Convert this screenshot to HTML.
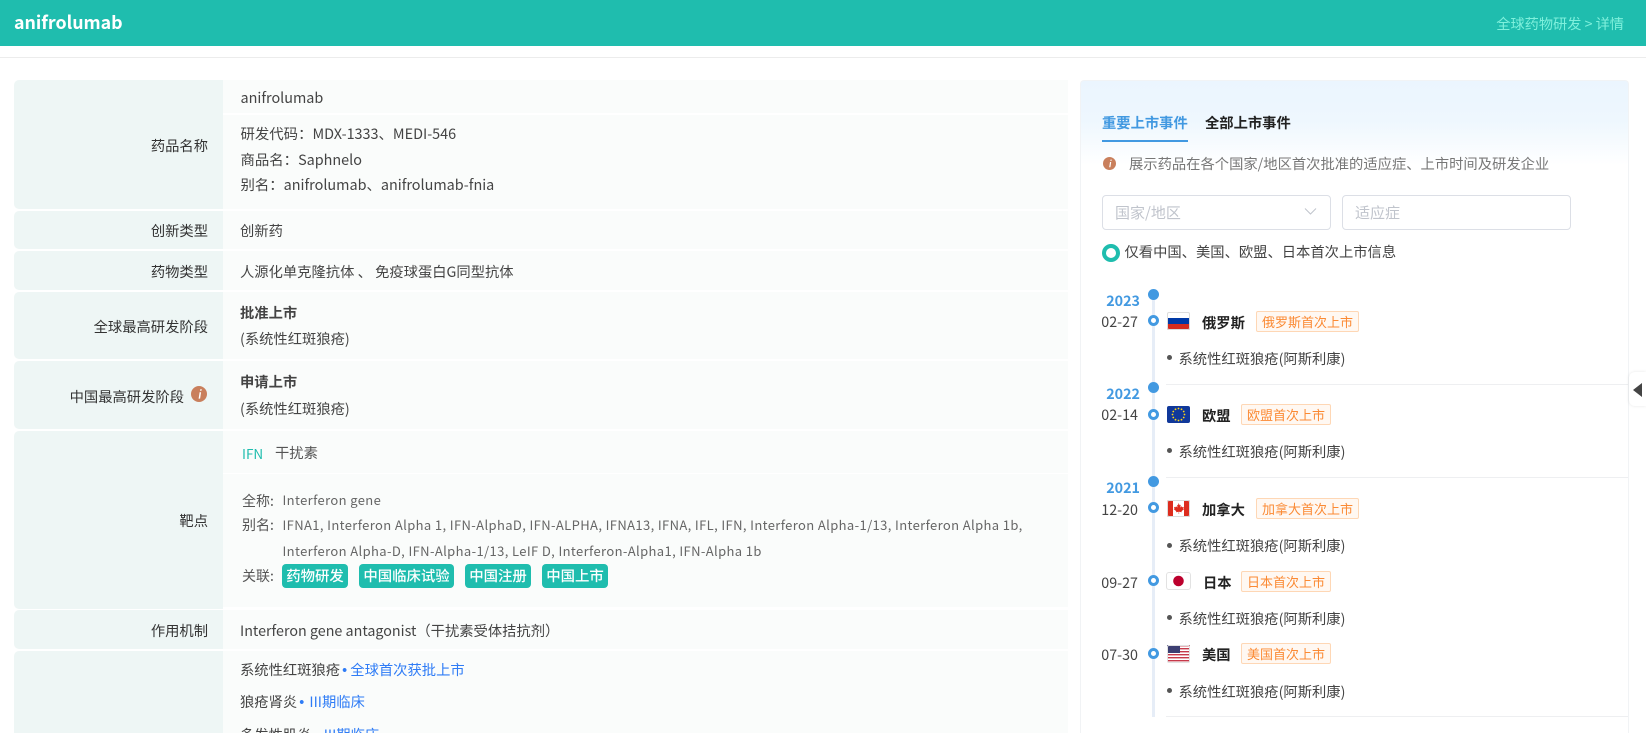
<!DOCTYPE html>
<html lang="zh"><head><meta charset="utf-8"><title>anifrolumab</title>
<style>
html,body{margin:0;padding:0;width:1646px;height:733px;overflow:hidden;background:#fff}
body{position:relative;font-family:"Noto Sans CJK SC","Liberation Sans",sans-serif;font-size:14.3px;color:#444}
.b{position:absolute}
.t{position:absolute;white-space:nowrap;line-height:20px;height:20px}
.l{position:absolute;left:14px;width:208.5px;background:#eef6f5}
.v{position:absolute;left:223px;width:845px;background:#fafcfb}
.lt{position:absolute;left:14px;width:194px;text-align:right;white-space:nowrap;line-height:20px;color:#333}
.s{font-size:13px;color:#666;letter-spacing:.375px}
.c{color:#555;font-size:14px}
.tag{position:absolute;top:564px;height:24px;background:#1fbdae;color:#fff;font-weight:500;font-size:14.4px;border-radius:4px;text-align:center;line-height:23px;white-space:nowrap}
.bl{color:#2f7cf6}
.bu{font-family:"Liberation Sans",sans-serif;margin-left:2px}
.big{position:absolute;left:1148px;width:11px;height:11px;border-radius:50%;background:#4299e1}
.ring{position:absolute;left:1148px;width:11px;height:11px;border-radius:50%;background:#fff;border:3px solid #4299e1;box-sizing:border-box}
.yr{position:absolute;left:1090px;width:50px;text-align:right;color:#4299e1;font-weight:700;line-height:20px}
.dt{position:absolute;left:1088px;width:50px;text-align:right;color:#444;line-height:20px}
.nm{position:absolute;font-weight:700;color:#222;line-height:20px;white-space:nowrap}
.tg{position:absolute;height:21px;box-sizing:border-box;border:1px solid #fed7b5;background:#fff8f2;color:#fb8a34;border-radius:2px;line-height:19px;text-align:center;font-size:13px;white-space:nowrap}
.dot{position:absolute;left:1166.5px;width:5px;height:5px;border-radius:50%;background:#555}
.ind{position:absolute;left:1178.5px;line-height:20px;white-space:nowrap;color:#444}
.hr{position:absolute;left:1166px;width:462px;height:1px;background:#eeeff1}
svg{position:absolute;display:block}
</style></head><body>

<div class="b" style="left:0;top:0;width:1646px;height:46px;background:#1fbdae"></div>
<div class="t" style="left:14px;top:12px;font-size:17.8px;font-weight:700;color:#fff">anifrolumab</div>
<div class="t" style="right:22px;top:14px;color:#7ff0dc;font-size:14.2px">全球药物研发 &gt; 详情</div>
<div class="b" style="left:0;top:57px;width:1646px;height:1px;background:#ececec"></div>

<!-- Left table -->
<div class="l" style="top:80px;height:129px;border-radius:5px 0 0 5px"></div>
<div class="v" style="top:80px;height:33px"></div>
<div class="v" style="top:115px;height:94px"></div>
<div class="l" style="top:211px;height:38px;border-radius:5px 0 0 5px"></div>
<div class="v" style="top:211px;height:38px"></div>
<div class="l" style="top:251px;height:39px;border-radius:5px 0 0 5px"></div>
<div class="v" style="top:251px;height:39px"></div>
<div class="l" style="top:292px;height:67px;border-radius:5px 0 0 5px"></div>
<div class="v" style="top:292px;height:67px"></div>
<div class="l" style="top:361px;height:68px;border-radius:5px 0 0 5px"></div>
<div class="v" style="top:361px;height:68px"></div>
<div class="l" style="top:431px;height:178px;border-radius:5px 0 0 5px"></div>
<div class="v" style="top:431px;height:42px"></div>
<div class="v" style="top:474px;height:133px"></div>
<div class="l" style="top:610px;height:39px;border-radius:5px 0 0 5px"></div>
<div class="v" style="top:610px;height:39px"></div>
<div class="l" style="top:651px;height:82px;border-radius:5px 0 0 0"></div>
<div class="v" style="top:651px;height:82px"></div>

<div class="lt" style="top:136px">药品名称</div>
<div class="lt" style="top:221px">创新类型</div>
<div class="lt" style="top:262px">药物类型</div>
<div class="lt" style="top:317px">全球最高研发阶段</div>
<div class="lt" style="top:387px;left:14px;width:170px">中国最高研发阶段</div>
<div class="lt" style="top:511px">靶点</div>
<div class="lt" style="top:621px">作用机制</div>

<svg style="left:191px;top:386px" width="16" height="16" viewBox="0 0 16 16"><circle cx="8" cy="8" r="8" fill="#c97f5c"/><path d="M9.3 3.2h1.5l-.3 1.5H9zM8.6 6.2h1.5l-1 6.4H7.6z" fill="#fff"/></svg>

<div class="t" style="left:240.500px;top:88px;font-size:14.4px">anifrolumab</div>
<div class="t" style="left:240.500px;top:124px;font-size:14.4px">研发代码：MDX-1333、MEDI-546</div>
<div class="t" style="left:240.500px;top:150px;font-size:14.4px">商品名：Saphnelo</div>
<div class="t" style="left:240.500px;top:175px;font-size:14.4px">别名：anifrolumab、anifrolumab-fnia</div>
<div class="t" style="left:240px;top:221px">创新药</div>
<div class="t" style="left:240px;top:262px">人源化单克隆抗体 、 免疫球蛋白G同型抗体</div>
<div class="t" style="left:240px;top:303px;font-weight:700">批准上市</div>
<div class="t" style="left:240px;top:329px">(系统性红斑狼疮)</div>
<div class="t" style="left:240px;top:372px;font-weight:700">申请上市</div>
<div class="t" style="left:240px;top:399px">(系统性红斑狼疮)</div>

<div class="t" style="left:242px;top:443px;font-size:13.5px;color:#1fbdae">IFN</div>
<div class="t" style="left:275px;top:443px;color:#555">干扰素</div>

<div class="t c" style="left:242px;top:491px">全称:</div>
<div class="t s" style="left:282.5px;top:490px">Interferon gene</div>
<div class="t c" style="left:242px;top:515px">别名:</div>
<div class="t s" style="left:282.5px;top:515px">IFNA1, Interferon Alpha 1, IFN-AlphaD, IFN-ALPHA, IFNA13, IFNA, IFL, IFN, Interferon Alpha-1/13, Interferon Alpha 1b,</div>
<div class="t s" style="left:282.5px;top:541px">Interferon Alpha-D, IFN-Alpha-1/13, LeIF D, Interferon-Alpha1, IFN-Alpha 1b</div>
<div class="t c" style="left:242px;top:566px">关联:</div>
<div class="tag" style="left:282px;width:66px">药物研发</div>
<div class="tag" style="left:359px;width:95px">中国临床试验</div>
<div class="tag" style="left:465px;width:66px">中国注册</div>
<div class="tag" style="left:542px;width:66px">中国上市</div>

<div class="t" style="left:240px;top:621px">Interferon gene antagonist（干扰素受体拮抗剂）</div>
<div class="t" style="left:240px;top:660px">系统性红斑狼疮<span class="bl"><span class="bu">•</span> 全球首次获批上市</span></div>
<div class="t" style="left:240px;top:692px">狼疮肾炎<span class="bl"><span class="bu">•</span> <span style="margin-left:2px">III期临床</span></span></div>
<div class="t" style="left:240px;top:725px">多发性肌炎<span class="bl"><span class="bu">•</span> <span style="margin-left:2px">III期临床</span></span></div>

<!-- Right panel -->
<div class="b" style="left:1080px;top:80px;width:549px;height:653px;box-sizing:border-box;border:1px solid #f1f3f5;border-bottom:0;border-radius:4px 4px 0 0;background:linear-gradient(#ebf5fe 0,#eef7fe 40px,#fff 84px)"></div>

<div class="t" style="left:1102px;top:113px;font-weight:700;color:#4299e1">重要上市事件</div>
<div class="t" style="left:1205px;top:113px;font-weight:700;color:#222">全部上市事件</div>
<div class="b" style="left:1102px;top:140px;width:86px;height:2px;background:#4299e1"></div>

<svg style="left:1103px;top:157px" width="13" height="13" viewBox="0 0 16 16"><circle cx="8" cy="8" r="8" fill="#c97f5c"/><path d="M9.3 3.2h1.5l-.3 1.5H9zM8.6 6.2h1.5l-1 6.4H7.6z" fill="#fff"/></svg>
<div class="t" style="left:1129px;top:154px;color:#777;font-size:14.3px">展示药品在各个国家/地区首次批准的适应症、上市时间及研发企业</div>

<div class="b" style="left:1102px;top:195px;width:229px;height:35px;box-sizing:border-box;border:1px solid #dcdfe6;border-radius:4px;background:#fff"></div>
<div class="t" style="left:1115px;top:203px;color:#c0c4cc;font-size:15px">国家/地区</div>
<svg style="left:1304px;top:207px" width="13" height="9" viewBox="0 0 13 9"><path d="M1 1.5l5.5 5.5L12 1.5" fill="none" stroke="#c0c4cc" stroke-width="1"/></svg>
<div class="b" style="left:1342px;top:195px;width:229px;height:35px;box-sizing:border-box;border:1px solid #dcdfe6;border-radius:4px;background:#fff"></div>
<div class="t" style="left:1355px;top:203px;color:#c0c4cc;font-size:15px">适应症</div>

<div class="b" style="left:1102px;top:243.500px;width:18px;height:18px;box-sizing:border-box;border:4px solid #1fbdae;border-radius:50%;background:#fff"></div>
<div class="t" style="left:1124.500px;top:242px">仅看中国、美国、欧盟、日本首次上市信息</div>

<!-- Timeline -->
<div class="b" style="left:1151.500px;top:294px;width:3px;height:423px;background:#e6edf7"></div>

<div class="hr" style="top:384px"></div>
<div class="hr" style="top:477px"></div>
<div class="hr" style="top:716px"></div>

<div class="big" style="top:289px"></div>
<div class="yr" style="top:291px">2023</div>
<div class="ring" style="top:315px"></div>
<div class="dt" style="top:312px">02-27</div>
<svg style="left:1167px;top:312px" width="23" height="18" viewBox="0 0 23 18"><rect width="23" height="18" rx="2" fill="#fff"/><rect y="6" width="23" height="6" fill="#0039a6"/><path d="M0 12h23v4a2 2 0 0 1-2 2H2a2 2 0 0 1-2-2z" fill="#d52b1e"/><rect x=".5" y=".5" width="22" height="17" rx="1.500" fill="none" stroke="#dcdcdc"/></svg>
<div class="nm" style="left:1202px;top:313px">俄罗斯</div>
<div class="tg" style="left:1256px;top:311px;width:103px">俄罗斯首次上市</div>
<div class="dot" style="top:355px"></div>
<div class="ind" style="top:349px">系统性红斑狼疮(阿斯利康)</div>

<div class="big" style="top:382px"></div>
<div class="yr" style="top:384px">2022</div>
<div class="ring" style="top:409px"></div>
<div class="dt" style="top:405px">02-14</div>
<svg style="left:1167px;top:406px" width="23" height="17" viewBox="0 0 23 17"><rect width="23" height="17" rx="2" fill="#10389a"/><g fill="#ffd617"><circle cx="11.500" cy="2.500" r=".9"/><circle cx="14.500" cy="3.300" r=".9"/><circle cx="16.700" cy="5.500" r=".9"/><circle cx="17.500" cy="8.500" r=".9"/><circle cx="16.700" cy="11.500" r=".9"/><circle cx="14.500" cy="13.700" r=".9"/><circle cx="11.500" cy="14.500" r=".9"/><circle cx="8.500" cy="13.700" r=".9"/><circle cx="6.300" cy="11.500" r=".9"/><circle cx="5.500" cy="8.500" r=".9"/><circle cx="6.300" cy="5.500" r=".9"/><circle cx="8.500" cy="3.300" r=".9"/></g></svg>
<div class="nm" style="left:1202px;top:406px">欧盟</div>
<div class="tg" style="left:1241px;top:404px;width:90px">欧盟首次上市</div>
<div class="dot" style="top:448px"></div>
<div class="ind" style="top:442px">系统性红斑狼疮(阿斯利康)</div>

<div class="big" style="top:476px"></div>
<div class="yr" style="top:478px">2021</div>
<div class="ring" style="top:502px"></div>
<div class="dt" style="top:500px">12-20</div>
<svg style="left:1167px;top:500px" width="23" height="17" viewBox="0 0 23 17"><rect width="23" height="17" rx="2" fill="#fff"/><path d="M0 2a2 2 0 0 1 2-2h4v17H2a2 2 0 0 1-2-2zM17 0h4a2 2 0 0 1 2 2v13a2 2 0 0 1-2 2h-4z" fill="#dd2c1e"/><path d="M11.500 3l1.200 2.200 1-.5-.4 2.800 1.500-1.300.4 1 1.600-.3-.5 1.700.8.500-2.600 2.100.3 1-2.700-.4V14h-.4v-2.200l-2.700.4.300-1-2.600-2.100.8-.5-.5-1.700 1.600.3.400-1 1.500 1.300-.4-2.800 1 .5z" fill="#dd2c1e"/><rect x=".5" y=".5" width="22" height="16" rx="1.500" fill="none" stroke="#dcdcdc"/></svg>
<div class="nm" style="left:1202px;top:500px">加拿大</div>
<div class="tg" style="left:1256px;top:498px;width:103px">加拿大首次上市</div>
<div class="dot" style="top:542.500px"></div>
<div class="ind" style="top:536px">系统性红斑狼疮(阿斯利康)</div>

<div class="ring" style="top:575px"></div>
<div class="dt" style="top:573px">09-27</div>
<svg style="left:1166px;top:572px" width="25" height="18" viewBox="0 0 25 18"><rect x=".5" y=".5" width="24" height="17" rx="2.500" fill="#fff" stroke="#e2e2e2"/><circle cx="12.500" cy="9" r="5.300" fill="#bc002d"/></svg>
<div class="nm" style="left:1203px;top:573px">日本</div>
<div class="tg" style="left:1241px;top:571px;width:90px">日本首次上市</div>
<div class="dot" style="top:614.500px"></div>
<div class="ind" style="top:609px">系统性红斑狼疮(阿斯利康)</div>

<div class="ring" style="top:648px"></div>
<div class="dt" style="top:645px">07-30</div>
<svg style="left:1167px;top:645px" width="23" height="18" viewBox="0 0 23 18"><rect width="23" height="18" rx="2" fill="#fff"/><g fill="#c6394a"><rect y="9" width="23" height="1.400"/><rect y="12" width="23" height="1.400"/><rect y="15" width="23" height="1.400"/><rect x="12" y="0" width="11" height="1.400"/><rect x="12" y="3" width="11" height="1.400"/><rect x="12" y="6" width="11" height="1.400"/></g><rect width="13" height="8" fill="#3c3f72"/><rect x=".5" y=".5" width="22" height="17" rx="1.500" fill="none" stroke="#e2e2e2"/></svg>
<div class="nm" style="left:1202px;top:645px">美国</div>
<div class="tg" style="left:1241px;top:643px;width:90px">美国首次上市</div>
<div class="dot" style="top:687.500px"></div>
<div class="ind" style="top:682px">系统性红斑狼疮(阿斯利康)</div>

<!-- Side toggle -->
<div class="b" style="left:1629px;top:372px;width:17px;height:34px;background:#fff;border-radius:6px 0 0 6px;box-shadow:0 0 3px rgba(0,0,0,.1)"></div>
<svg style="left:1633px;top:383px" width="9" height="14" viewBox="0 0 9 14"><path d="M9 0v14L0 7z" fill="#444"/></svg>

</body></html>
